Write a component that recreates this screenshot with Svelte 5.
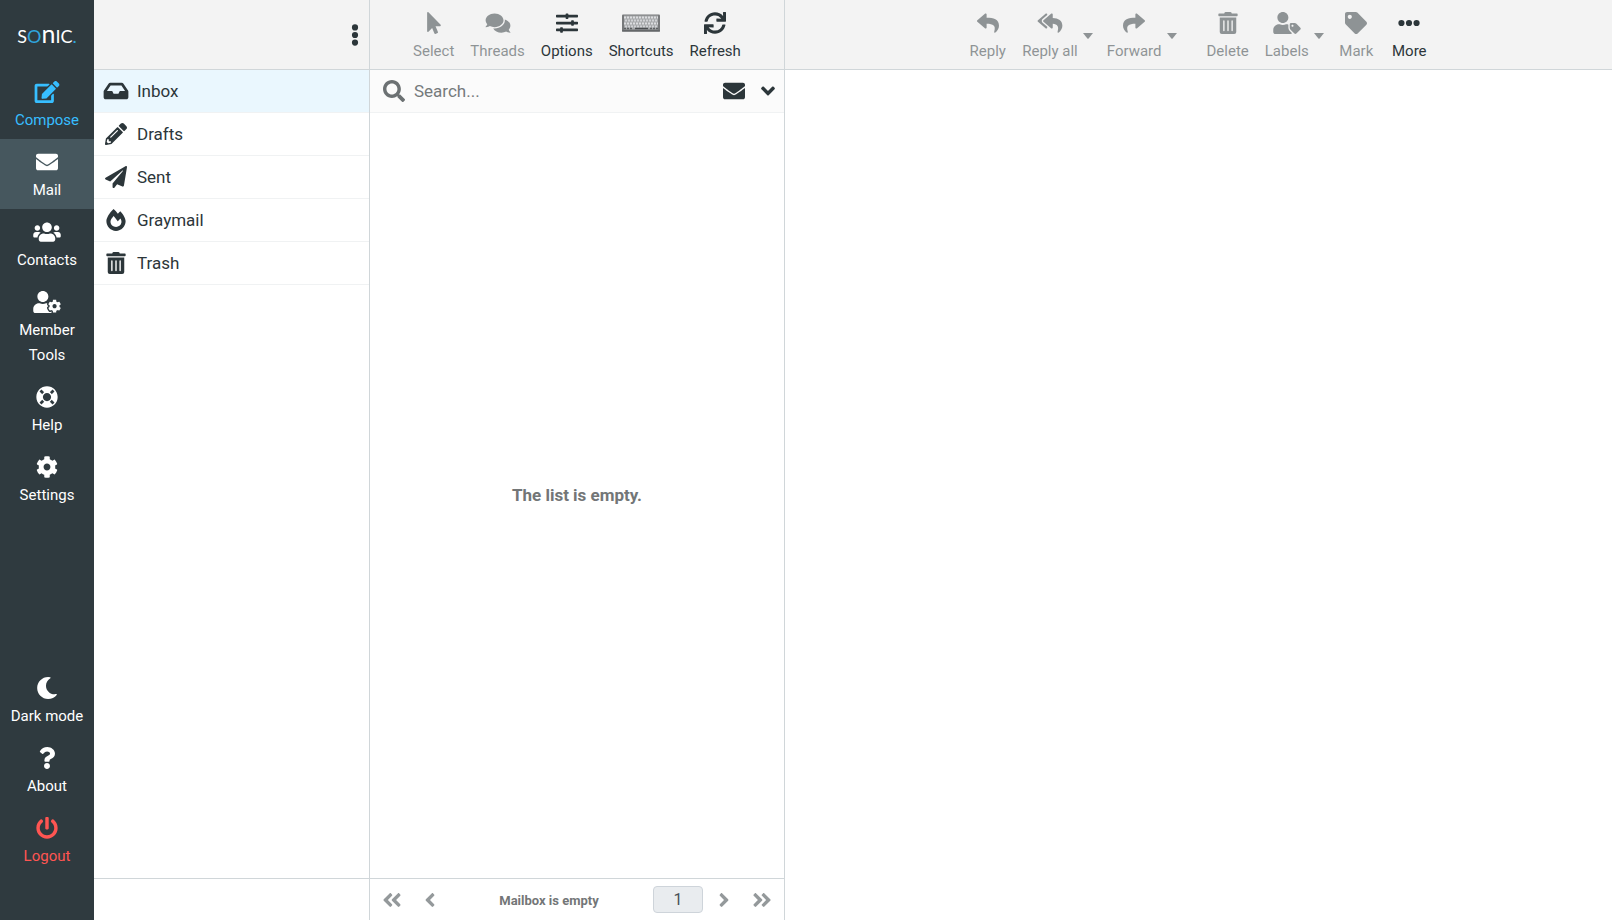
<script>
  const icons = {
    edit: [576, 'M402.6 83.2l90.2 90.2c3.8 3.8 3.8 10 0 13.8L274.4 405.6l-92.8 10.3c-12.4 1.4-22.9-9.1-21.5-21.5l10.3-92.8L388.8 83.2c3.8-3.8 10-3.8 13.8 0zm162-22.9l-48.8-48.8c-15.2-15.2-39.9-15.2-55.2 0l-35.4 35.4c-3.8 3.8-3.8 10 0 13.8l90.2 90.2c3.8 3.8 10 3.8 13.8 0l35.4-35.4c15.2-15.3 15.2-40 0-55.2zM384 346.2V448H64V128h229.8c3.2 0 6.2-1.3 8.5-3.5l40-40c7.6-7.6 2.2-20.5-8.5-20.5H48C21.5 64 0 85.5 0 112v352c0 26.5 21.5 48 48 48h352c26.5 0 48-21.5 48-48V306.2c0-10.7-12.9-16-20.5-8.5l-40 40c-2.2 2.3-3.5 5.3-3.5 8.5z'],
    envelope: [512, 'M502.3 190.8c3.9-3.1 9.7-.2 9.7 4.7V400c0 26.5-21.5 48-48 48H48c-26.5 0-48-21.5-48-48V195.6c0-5 5.7-7.8 9.7-4.7 22.4 17.4 52.1 39.5 154.1 113.6 21.1 15.4 56.7 47.8 92.2 47.6 35.7.3 72-32.8 92.3-47.6 102-74.1 131.6-96.3 154-113.7zM256 320c23.2.4 56.6-29.2 73.4-41.4 132.7-96.3 142.8-104.7 173.4-128.7 5.8-4.5 9.2-11.5 9.2-18.9v-19c0-26.5-21.5-48-48-48H48c-26.5 0-48 21.5-48 48v19c0 7.4 3.4 14.3 9.2 18.9 30.6 23.9 40.7 32.4 173.4 128.7 16.8 12.2 50.2 41.8 73.4 41.4z'],
    users: [640, 'M96 224c35.3 0 64-28.7 64-64s-28.7-64-64-64-64 28.7-64 64 28.7 64 64 64zm448 0c35.3 0 64-28.7 64-64s-28.7-64-64-64-64 28.7-64 64 28.7 64 64 64zm32 32h-64c-17.6 0-33.5 7.1-45.1 18.6 40.3 22.1 68.9 62 75.1 109.4h66c17.7 0 32-14.3 32-32v-32c0-35.3-28.7-64-64-64zm-256 0c61.9 0 112-50.1 112-112S381.9 32 320 32 208 82.1 208 144s50.1 112 112 112zm76.8 32h-8.3c-20.8 10-43.9 16-68.5 16s-47.6-6-68.5-16h-8.3C179.6 288 128 339.6 128 403.2V432c0 26.5 21.5 48 48 48h288c26.5 0 48-21.5 48-48v-28.8c0-63.6-51.6-115.2-115.2-115.2zm-223.7-13.4C161.5 263.1 145.6 256 128 256H64c-35.3 0-64 28.7-64 64v32c0 17.7 14.3 32 32 32h65.9c6.3-47.4 34.9-87.3 75.2-109.4z'],
    userCog: [640, 'M610.5 373.3c2.6-14.1 2.6-28.5 0-42.6l25.8-14.9c3-1.7 4.3-5.2 3.3-8.5-6.7-21.6-18.2-41.2-33.2-57.4-2.3-2.5-6-3.1-9-1.4l-25.8 14.9c-10.9-9.3-23.4-16.5-36.9-21.3v-29.8c0-3.4-2.4-6.4-5.7-7.1-22.3-5-45-4.8-66.2 0-3.3.7-5.7 3.7-5.7 7.1v29.8c-13.5 4.8-26 12-36.9 21.3l-25.8-14.9c-2.9-1.7-6.7-1.1-9 1.4-15 16.2-26.5 35.8-33.2 57.4-1 3.3.4 6.8 3.3 8.5l25.8 14.9c-2.6 14.1-2.6 28.5 0 42.6l-25.8 14.9c-3 1.7-4.3 5.2-3.3 8.5 6.7 21.6 18.2 41.1 33.2 57.4 2.3 2.5 6 3.1 9 1.4l25.8-14.9c10.9 9.3 23.4 16.5 36.9 21.3v29.8c0 3.4 2.4 6.4 5.7 7.1 22.3 5 45 4.8 66.2 0 3.3-.7 5.7-3.7 5.7-7.1v-29.8c13.5-4.8 26-12 36.9-21.3l25.8 14.9c2.9 1.7 6.7 1.1 9-1.4 15-16.2 26.5-35.8 33.2-57.4 1-3.3-.4-6.8-3.3-8.5l-25.8-14.9zM496 400.5c-26.8 0-48.5-21.8-48.5-48.5s21.8-48.5 48.5-48.5 48.5 21.8 48.5 48.5-21.7 48.5-48.5 48.5zM224 256c70.7 0 128-57.3 128-128S294.7 0 224 0 96 57.3 96 128s57.3 128 128 128zm201.2 226.5c-2.3-1.2-4.6-2.6-6.8-3.9l-7.9 4.6c-6 3.4-12.8 5.3-19.6 5.3-10.9 0-21.4-4.6-28.9-12.6-18.3-19.8-32.3-43.9-40.2-69.6-5.5-17.7 1.9-36.4 17.9-45.7l7.9-4.6c-.1-2.6-.1-5.2 0-7.8l-7.9-4.6c-16-9.2-23.4-28-17.9-45.7.9-2.9 2.2-5.8 3.2-8.7-3.8-.3-7.5-1.2-11.4-1.2h-16.7c-22.2 10.2-46.9 16-72.9 16s-50.6-5.8-72.9-16h-16.7C60.2 288 0 348.2 0 422.4V464c0 26.5 21.5 48 48 48h352c10.1 0 19.5-3.2 27.2-8.5-1.2-3.8-2-7.7-2-11.8v-9.2z'],
    lifeRing: [512, 'M256 8C119.033 8 8 119.033 8 256s111.033 248 248 248 248-111.033 248-248S392.967 8 256 8zm173.696 119.559l-63.399 63.399c-10.987-18.559-26.67-34.252-45.255-45.255l63.399-63.399a218.396 218.396 0 0 1 45.255 45.255zM256 352c-53.019 0-96-42.981-96-96s42.981-96 96-96 96 42.981 96 96-42.981 96-96 96zM127.559 82.304l63.399 63.399c-18.559 10.987-34.252 26.67-45.255 45.255l-63.399-63.399a218.372 218.372 0 0 1 45.255-45.255zM82.304 384.441l63.399-63.399c10.987 18.559 26.67 34.252 45.255 45.255l-63.399 63.399a218.396 218.396 0 0 1-45.255-45.255zm302.137 45.255l-63.399-63.399c18.559-10.987 34.252-26.67 45.255-45.255l63.399 63.399a218.403 218.403 0 0 1-45.255 45.255z'],
    cog: [512, 'M487.4 315.7l-42.6-24.6c4.3-23.2 4.3-47 0-70.2l42.6-24.6c4.9-2.8 7.1-8.6 5.5-14-11.1-35.6-30-67.8-54.7-94.6-3.8-4.1-10-5.1-14.8-2.3L380.8 110c-17.9-15.4-38.5-27.3-60.8-35.1V25.8c0-5.6-3.9-10.5-9.4-11.7-36.7-8.2-74.3-7.8-109.2 0-5.5 1.2-9.4 6.1-9.4 11.7V75c-22.2 7.9-42.8 19.8-60.8 35.1L88.7 85.5c-4.9-2.8-11-1.9-14.8 2.3-24.7 26.7-43.6 58.9-54.7 94.6-1.7 5.4.6 11.2 5.5 14L67.3 221c-4.3 23.2-4.3 47 0 70.2l-42.6 24.6c-4.9 2.8-7.1 8.6-5.5 14 11.1 35.6 30 67.8 54.7 94.6 3.8 4.1 10 5.1 14.8 2.3l42.6-24.6c17.9 15.4 38.5 27.3 60.8 35.1v49.2c0 5.6 3.9 10.5 9.4 11.7 36.7 8.2 74.3 7.8 109.2 0 5.5-1.2 9.4-6.1 9.4-11.7v-49.2c22.2-7.9 42.8-19.8 60.8-35.1l42.6 24.6c4.9 2.8 11 1.9 14.8-2.3 24.7-26.7 43.6-58.9 54.7-94.6 1.5-5.5-.7-11.3-5.6-14.1zM256 336c-44.1 0-80-35.9-80-80s35.9-80 80-80 80 35.9 80 80-35.9 80-80 80z'],
    moon: [512, 'M283.211 512c78.962 0 151.079-35.925 198.857-94.792 7.068-8.708-.639-21.43-11.562-19.35-124.203 23.654-238.262-71.576-238.262-196.954 0-72.222 38.662-138.635 101.498-174.394 9.686-5.512 7.25-20.197-3.756-22.23A258.156 258.156 0 0 0 283.211 0c-141.309 0-256 114.511-256 256 0 141.309 114.511 256 256 256z'],
    question: [384, 'M202.021 0C122.202 0 70.503 32.703 29.914 91.026c-7.363 10.58-5.093 25.086 5.178 32.874l43.138 32.709c10.373 7.865 25.132 6.026 33.253-4.148 25.049-31.381 43.63-49.449 82.757-49.449 30.764 0 68.816 19.799 68.816 49.631 0 22.552-18.617 34.134-48.993 51.164-35.423 19.86-82.299 44.576-82.299 106.405V320c0 13.255 10.745 24 24 24h72.471c13.255 0 24-10.745 24-24v-5.773c0-42.86 125.268-44.645 125.268-160.627C377.504 66.256 286.902 0 202.021 0zM192 373.459c-38.196 0-69.271 31.075-69.271 69.271 0 38.195 31.075 69.27 69.271 69.27s69.271-31.075 69.271-69.271-31.075-69.27-69.271-69.27z'],
    power: [512, 'M400 54.1c63 45 104 118.6 104 201.9 0 136.8-110.8 247.7-247.5 248C120 504.3 8.2 393 8 256.4 7.9 173.1 48.9 99.3 111.8 54.2c11.7-8.3 28-4.8 35 7.7L162.6 90c5.9 10.5 3.1 23.8-6.6 31-41.5 30.8-68 79.6-68 134.9-.1 92.3 74.5 168.1 168 168.1 91.6 0 168.6-74.2 168-169.1-.3-51.8-24.7-101.8-68.1-134-9.7-7.2-12.4-20.5-6.5-30.9l15.8-28.1c7-12.4 23.2-16.1 34.8-7.8zM296 264V24c0-13.3-10.7-24-24-24h-32c-13.3 0-24 10.7-24 24v240c0 13.3 10.7 24 24 24h32c13.3 0 24-10.7 24-24z'],
    inbox: [576, 'M567.938 243.908L462.25 85.374A48.003 48.003 0 0 0 422.311 64H153.689a48 48 0 0 0-39.938 21.374L8.062 243.908A47.994 47.994 0 0 0 0 270.533V400c0 26.51 21.49 48 48 48h480c26.51 0 48-21.49 48-48V270.533a47.994 47.994 0 0 0-8.062-26.625zM162.252 128h251.497l85.333 128H376l-32 64H232l-32-64H76.918l85.334-128z'],
    pencil: [512, 'M497.9 142.1l-46.1 46.1c-4.7 4.7-12.3 4.7-17 0l-111-111c-4.7-4.7-4.7-12.3 0-17l46.1-46.1c18.7-18.7 49.1-18.7 67.9 0l60.1 60.1c18.8 18.7 18.8 49.1 0 67.9zM284.2 99.8L21.6 362.4.4 483.9c-2.9 16.4 11.4 30.6 27.8 27.8l121.5-21.3 262.6-262.6c4.7-4.7 4.7-12.3 0-17l-111-111c-4.8-4.7-12.4-4.7-17.1 0zM124.1 339.9c-5.5-5.5-5.5-14.3 0-19.8l154-154c5.5-5.5 14.3-5.5 19.8 0s5.5 14.3 0 19.8l-154 154c-5.5 5.5-14.3 5.5-19.8 0zM88 424h48v36.3l-64.5 11.3-31.1-31.1L51.7 376H88v48z'],
    plane: [512, 'M476 3.2L12.5 270.6c-18.1 10.4-15.8 35.6 2.2 43.2L121 358.4l287.3-253.2c5.5-4.9 13.3 2.6 8.6 8.3L176 407v80.5c0 23.6 28.5 32.9 42.5 15.8L282 426l124.6 52.2c14.2 6 30.4-2.9 33-18.2l72-432C515 7.8 493.3-6.8 476 3.2z'],
    fire: [448, 'M323.56 51.2c-20.8 19.3-39.58 39.59-56.22 59.97C240.08 73.62 206.28 35.53 168 0 69.74 91.17 0 209.96 0 281.6 0 408.85 100.29 512 224 512s224-103.15 224-230.4c0-53.27-51.98-163.14-124.44-230.4zm-19.47 340.65C282.43 407.01 255.72 416 226.86 416 154.71 416 96 368.26 96 290.75c0-38.61 24.31-72.63 72.79-130.75 6.93 7.98 98.83 125.34 98.83 125.34l58.63-66.88c4.14 6.85 7.91 13.55 11.27 19.97 27.35 52.19 15.81 118.97-33.43 153.42z'],
    trash: [448, 'M32 464a48 48 0 0 0 48 48h288a48 48 0 0 0 48-48V128H32zm272-256a16 16 0 0 1 32 0v224a16 16 0 0 1-32 0zm-96 0a16 16 0 0 1 32 0v224a16 16 0 0 1-32 0zm-96 0a16 16 0 0 1 32 0v224a16 16 0 0 1-32 0zM432 32H312l-9.4-18.7A24 24 0 0 0 281.1 0H166.8a23.72 23.72 0 0 0-21.4 13.3L136 32H16A16 16 0 0 0 0 48v32a16 16 0 0 0 16 16h416a16 16 0 0 0 16-16V48a16 16 0 0 0-16-16z'],
    pointer: [320, 'M302.189 329.126H196.105l55.831 135.993c3.889 9.428-.555 19.999-9.444 23.999l-49.165 21.427c-9.165 4-19.443-.571-23.332-9.714l-53.053-129.136-86.664 89.138C18.729 472.71 0 463.554 0 447.977V18.299C0 1.899 19.921-6.096 30.277 5.443l284.412 292.542c11.472 11.179 3.007 31.141-12.5 31.141z'],
    comments: [576, 'M416 192c0-88.4-93.1-160-208-160S0 103.6 0 192c0 34.3 14.1 65.9 38 92-13.4 30.2-35.5 54.2-35.8 54.5-2.2 2.3-2.8 5.7-1.5 8.7S4.8 352 8 352c36.6 0 66.9-12.3 88.7-25 32.2 15.7 70.3 25 111.3 25 114.9 0 208-71.6 208-160zm122 220c23.9-26 38-57.7 38-92 0-66.9-53.5-124.2-129.3-148.1.9 6.6 1.3 13.3 1.3 20.1 0 105.9-107.7 192-240 192-10.8 0-21.3-.8-31.7-1.9C207.8 439.6 281.8 480 368 480c41 0 79.1-9.2 111.3-25 21.8 12.7 52.1 25 88.7 25 3.2 0 6.1-1.9 7.3-4.8 1.3-2.9.7-6.3-1.5-8.7-.3-.3-22.4-24.2-35.8-54.5z'],
    sliders: [512, 'M496 384H160v-16c0-8.8-7.2-16-16-16h-32c-8.8 0-16 7.2-16 16v16H16c-8.8 0-16 7.2-16 16v32c0 8.8 7.2 16 16 16h80v16c0 8.8 7.2 16 16 16h32c8.8 0 16-7.2 16-16v-16h336c8.8 0 16-7.2 16-16v-32c0-8.8-7.2-16-16-16zm0-160h-80v-16c0-8.8-7.2-16-16-16h-32c-8.8 0-16 7.2-16 16v16H16c-8.8 0-16 7.2-16 16v32c0 8.8 7.2 16 16 16h336v16c0 8.8 7.2 16 16 16h32c8.8 0 16-7.2 16-16v-16h80c8.8 0 16-7.2 16-16v-32c0-8.8-7.2-16-16-16zm0-160H288V48c0-8.8-7.2-16-16-16h-32c-8.8 0-16 7.2-16 16v16H16C7.2 64 0 71.2 0 80v32c0 8.8 7.2 16 16 16h208v16c0 8.8 7.2 16 16 16h32c8.8 0 16-7.2 16-16v-16h208c8.8 0 16-7.2 16-16V80c0-8.8-7.2-16-16-16z'],
    sync: [512, 'M440.65 12.57l4 82.77A247.16 247.16 0 0 0 255.83 8C134.73 8 33.91 94.92 12.29 209.82A12 12 0 0 0 24.09 224h49.05a12 12 0 0 0 11.67-9.26 175.91 175.91 0 0 1 317-56.94l-101.46-4.86a12 12 0 0 0-12.57 12v47.41a12 12 0 0 0 12 12H500a12 12 0 0 0 12-12V12a12 12 0 0 0-12-12h-47.37a12 12 0 0 0-11.98 12.57zM255.83 432a175.61 175.61 0 0 1-146-77.8l101.8 4.87a12 12 0 0 0 12.57-12v-47.4a12 12 0 0 0-12-12H12a12 12 0 0 0-12 12V500a12 12 0 0 0 12 12h47.35a12 12 0 0 0 12-12.6l-4.15-82.57A247.17 247.17 0 0 0 255.83 504c121.11 0 221.93-86.92 243.55-201.82a12 12 0 0 0-11.8-14.18h-49.05a12 12 0 0 0-11.67 9.26A175.86 175.86 0 0 1 255.83 432z'],
    search: [512, 'M505 442.7L405.3 343c-4.5-4.5-10.6-7-17-7H372c27.6-35.3 44-79.7 44-128C416 93.1 322.9 0 208 0S0 93.1 0 208s93.1 208 208 208c48.3 0 92.7-16.4 128-44v16.3c0 6.4 2.5 12.5 7 17l99.7 99.7c9.4 9.4 24.6 9.4 33.9 0l28.3-28.3c9.4-9.4 9.4-24.6.1-34zM208 336c-70.7 0-128-57.2-128-128 0-70.7 57.2-128 128-128 70.7 0 128 57.2 128 128 0 70.7-57.2 128-128 128z'],
    angleDown: [320, 'M143 352.3L7 216.3c-9.4-9.4-9.4-24.6 0-33.9l22.6-22.6c9.4-9.4 24.6-9.4 33.9 0l96.4 96.4 96.4-96.4c9.4-9.4 24.6-9.4 33.9 0l22.6 22.6c9.4 9.4 9.4 24.6 0 33.9l-136 136c-9.2 9.4-24.4 9.4-33.8 0z'],
    angle: [256, 'M31.7 239l136-136c9.4-9.4 24.6-9.4 33.9 0l22.6 22.6c9.4 9.4 9.4 24.6 0 33.9L127.9 256l96.4 96.4c9.4 9.4 9.4 24.6 0 33.9L201.7 409c-9.4 9.4-24.6 9.4-33.9 0l-136-136c-9.5-9.4-9.5-24.6-.1-34z'],
    angles: [448, 'M31.7 239l136-136c9.4-9.4 24.6-9.4 33.9 0l22.6 22.6c9.4 9.4 9.4 24.6 0 33.9L127.9 256l96.4 96.4c9.4 9.4 9.4 24.6 0 33.9L201.7 409c-9.4 9.4-24.6 9.4-33.9 0l-136-136c-9.5-9.4-9.5-24.6-.1-34zM223.7 239l136-136c9.4-9.4 24.6-9.4 33.9 0l22.6 22.6c9.4 9.4 9.4 24.6 0 33.9L319.9 256l96.4 96.4c9.4 9.4 9.4 24.6 0 33.9L393.7 409c-9.4 9.4-24.6 9.4-33.9 0l-136-136c-9.5-9.4-9.5-24.6-.1-34z'],
    reply: [512, 'M8.309 189.836L184.313 37.851C199.719 24.546 224 35.347 224 56.015v80.053c160.629 1.839 288 34.032 288 186.258 0 61.441-39.581 122.309-83.333 154.132-13.653 9.931-33.111-2.533-28.077-18.631 45.344-145.012-21.507-183.51-176.59-185.742V360c0 20.7-24.3 31.453-39.687 18.164l-176.004-152c-11.071-9.562-11.086-26.753 0-36.328z'],
    replyAll: [576, 'M136.309 189.836L312.313 37.851C327.72 24.546 352 35.348 352 56.015v82.763c129.182 10.231 224 52.212 224 183.548 0 61.441-39.582 122.309-83.333 154.132-13.653 9.931-33.111-2.533-28.077-18.631 38.512-123.162-3.922-169.482-112.59-182.015v84.175c0 20.701-24.3 31.453-39.687 18.164L136.309 226.164c-11.071-9.561-11.086-26.753 0-36.328zm-128 36.328L184.313 378.15C199.7 391.439 224 380.687 224 359.986v-15.818l-108.606-93.785A55.96 55.96 0 0 1 96 207.998a55.953 55.953 0 0 1 19.393-42.38L224 71.832V56.015c0-20.667-24.28-31.469-39.687-18.164L8.309 189.836c-11.086 9.575-11.071 26.767 0 36.328z'],
    tag: [512, 'M0 252.118V48C0 21.49 21.49 0 48 0h204.118a48 48 0 0 1 33.941 14.059l211.882 211.882c18.745 18.745 18.745 49.137 0 67.882L293.823 497.941c-18.745 18.745-49.137 18.745-67.882 0L14.059 286.059A48 48 0 0 1 0 252.118zM112 64c-26.51 0-48 21.49-48 48s21.49 48 48 48 48-21.49 48-48-21.49-48-48-48z'],
    userTag: [640, 'M630.6 364.9l-90.3-90.2c-12-12-28.3-18.7-45.3-18.7h-79.3c-17.7 0-32 14.3-32 32v79.2c0 17 6.7 33.2 18.7 45.2l90.3 90.2c12.5 12.5 32.8 12.5 45.3 0l92.5-92.5c12.6-12.5 12.6-32.7.1-45.2zm-182.8-21c-13.3 0-24-10.7-24-24s10.7-24 24-24 24 10.7 24 24c0 13.2-10.7 24-24 24zm-223.8-88c70.7 0 128-57.3 128-128C352 57.3 294.7 0 224 0S96 57.3 96 128c0 70.6 57.3 127.9 128 127.9zm127.8 111.2V294c-12.2-3.6-24.9-6.2-38.2-6.2h-16.7c-22.2 10.2-46.9 16-72.9 16s-50.6-5.8-72.9-16h-16.7C60.2 287.9 0 348.1 0 422.3v41.6c0 26.5 21.5 48 48 48h352c15.5 0 29.1-7.5 37.9-18.9l-58-58c-18.1-18.1-28.1-42.2-28.1-67.9z'],
    dots: [512, 'M8 256a72 72 0 1 0 144 0a72 72 0 1 0-144 0zM184 256a72 72 0 1 0 144 0a72 72 0 1 0-144 0zM360 256a72 72 0 1 0 144 0a72 72 0 1 0-144 0z'],
    dotsV: [192, 'M24 80a72 72 0 1 0 144 0a72 72 0 1 0-144 0zM24 256a72 72 0 1 0 144 0a72 72 0 1 0-144 0zM24 432a72 72 0 1 0 144 0a72 72 0 1 0-144 0z']
  };

  const mainTasks = [
    { icon: 'edit', label: 'Compose', kind: 'compose' },
    { icon: 'envelope', label: 'Mail', kind: 'selected' },
    { icon: 'users', label: 'Contacts' },
    { icon: 'userCog', label: 'Member Tools' },
    { icon: 'lifeRing', label: 'Help' },
    { icon: 'cog', label: 'Settings' }
  ];
  const metaTasks = [
    { icon: 'moon', label: 'Dark mode' },
    { icon: 'question', label: 'About' },
    { icon: 'power', label: 'Logout', kind: 'logout' }
  ];
  const folders = [
    { icon: 'inbox', label: 'Inbox' },
    { icon: 'pencil', label: 'Drafts' },
    { icon: 'plane', label: 'Sent' },
    { icon: 'fire', label: 'Graymail' },
    { icon: 'trash', label: 'Trash' }
  ];
  const listTools = [
    { icon: 'pointer', label: 'Select', disabled: true },
    { icon: 'comments', label: 'Threads', disabled: true },
    { icon: 'sliders', label: 'Options' },
    { icon: 'keyboard', label: 'Shortcuts' },
    { icon: 'sync', label: 'Refresh' }
  ];
  const messageTools = [
    { icon: 'reply', label: 'Reply', disabled: true },
    { icon: 'replyAll', label: 'Reply all', disabled: true, menu: true },
    { icon: 'reply', flip: true, label: 'Forward', disabled: true, menu: true, last: true },
    { icon: 'trash', label: 'Delete', disabled: true },
    { icon: 'userTag', label: 'Labels', disabled: true, menu: true },
    { icon: 'tag', label: 'Mark', disabled: true },
    { icon: 'dots', label: 'More' }
  ];

  let current = $state('Inbox');
</script>

{#snippet icon(name, flip = false)}
  <svg class="icon" class:flip viewBox="0 0 {icons[name][0]} 512" aria-hidden="true"><path d={icons[name][1]} /></svg>
{/snippet}

{#snippet keyboard()}
  <svg class="keyboard" viewBox="0 0 38 17" aria-hidden="true">
    <rect width="38" height="17" rx="1" fill="#77797b" />
    <rect x="2" y="1" width="34" height="14" fill="#a6a8aa" />
    <path d="M2 3h34M2 9h34" stroke="#dcdde0" stroke-width="2" stroke-dasharray="2 1" />
    <path d="M3 6h32M3 12h32" stroke="#d0d2d5" stroke-width="2" stroke-dasharray="2 1" />
    <path d="M13 14h13" stroke="#4b4e50" stroke-width="1.5" />
    <path d="M2 14h9M28 14h8" stroke="#5e6163" stroke-width="1.5" stroke-dasharray="2 1" />
    <path d="M0 16.5h38" stroke="#55585a" />
  </svg>
{/snippet}

{#snippet task(item)}
  <a class="task {item.kind ?? ''}" href="#{item.icon}">
    {@render icon(item.icon)}
    <span>{item.label}</span>
  </a>
{/snippet}

{#snippet tool(item)}
  <div class="tool-group" class:menu={item.menu} class:last={item.last}>
    <button class="tool" type="button" disabled={item.disabled}>
      {#if item.icon === 'keyboard'}{@render keyboard()}{:else}{@render icon(item.icon, item.flip)}{/if}
      <span>{item.label}</span>
    </button>
    {#if item.menu}
      <button class="caret" type="button" disabled aria-label="{item.label} options">
        <svg viewBox="0 0 10 6" aria-hidden="true"><path d="M0 0h10L5.6 5.4a.8.8 0 0 1-1.2 0z" /></svg>
      </button>
    {/if}
  </div>
{/snippet}

<div class="layout">
  <nav class="taskmenu" aria-label="Tasks">
    <div class="logo"><span>S</span><span class="blue">O</span><span class="tall">n</span><span>I</span><span>C</span><span class="blue">.</span></div>
    {#each mainTasks as item}{@render task(item)}{/each}
    <div class="spacer"></div>
    {#each metaTasks as item}{@render task(item)}{/each}
  </nav>

  <section class="column folders">
    <header class="bar folder-head">
      <button class="plain more" type="button" aria-label="Folder actions">{@render icon('dotsV')}</button>
    </header>
    <ul>
      {#each folders as f}
        <li class:selected={current === f.label}>
          <a href="#{f.label}" onclick={() => (current = f.label)}>{@render icon(f.icon)}<span>{f.label}</span></a>
        </li>
      {/each}
    </ul>
    <footer></footer>
  </section>

  <section class="column messages">
    <header class="bar">{#each listTools as item}{@render tool(item)}{/each}</header>
    <form class="search">
      <label for="q">{@render icon('search')}</label>
      <input id="q" type="text" placeholder="Search..." aria-label="Search" />
      <button class="plain" type="button" aria-label="Unread only">{@render icon('envelope')}</button>
      <button class="plain toggle" type="button" aria-label="Search options">{@render icon('angleDown')}</button>
    </form>
    <div class="empty">The list is empty.</div>
    <footer>
      <button class="plain" type="button" disabled aria-label="First page">{@render icon('angles')}</button>
      <button class="plain" type="button" disabled aria-label="Previous page">{@render icon('angle')}</button>
      <span class="count">Mailbox is empty</span>
      <input class="page" type="text" value="1" disabled aria-label="Page" />
      <button class="plain" type="button" disabled aria-label="Next page">{@render icon('angle', true)}</button>
      <button class="plain" type="button" disabled aria-label="Last page">{@render icon('angles', true)}</button>
    </footer>
  </section>

  <main class="column">
    <header class="bar">{#each messageTools as item}{@render tool(item)}{/each}</header>
  </main>
</div>

<style>
  :global(body) {
    margin: 0;
    background: #fff;
  }
  .layout {
    display: grid;
    grid-template-columns: 94px 276px 415px minmax(0, 1fr);
    min-height: 100vh;
    color: #2c363a;
    font: 17px/25px Roboto, sans-serif;
  }
  .layout * {
    box-sizing: border-box;
  }
  button,
  input {
    font: inherit;
    color: inherit;
  }
  button {
    border: 0;
    background: none;
    padding: 0;
    cursor: pointer;
  }
  button:disabled {
    cursor: default;
  }
  a {
    color: inherit;
    text-decoration: none;
  }
  .icon {
    display: block;
    flex: none;
    width: 28px;
    height: 22px;
    fill: currentColor;
  }
  .flip {
    transform: scaleX(-1);
  }

  .taskmenu {
    display: flex;
    flex-direction: column;
    padding-bottom: 45px;
    background: #2f3a3f;
    color: #fff;
  }
  .logo {
    display: flex;
    justify-content: center;
    align-items: baseline;
    height: 69px;
    padding-top: 17px;
    font: 18px/32px Lato, sans-serif;
  }
  .logo .tall {
    font-size: 25px;
  }
  .logo .blue {
    color: #2fa5dd;
  }
  .task {
    display: flex;
    flex-direction: column;
    align-items: center;
    gap: 5px;
    padding: 12px 8px 6px;
    font-size: 15px;
    text-align: center;
  }
  .compose {
    color: #37beff;
  }
  .selected.task {
    background: #46575e;
  }
  .logout {
    color: #ff5552;
  }
  .spacer {
    flex: 1;
  }

  .column {
    display: flex;
    flex-direction: column;
    border-right: 1px solid #d0d6d9;
  }
  main.column {
    border-right: 0;
  }
  .bar {
    display: flex;
    justify-content: center;
    height: 70px;
    background: #f3f3f3;
    border-bottom: 1px solid #d0d6d9;
  }
  .folder-head {
    justify-content: flex-end;
    align-items: center;
  }
  ul {
    flex: 1;
    margin: 0;
    padding: 0;
    list-style: none;
  }
  li {
    border-bottom: 1px solid #f0f2f3;
  }
  li.selected {
    background: #eaf7fe;
  }
  li a {
    display: flex;
    align-items: center;
    gap: 7px;
    height: 42px;
    padding: 0 8px;
  }

  .tool-group {
    display: flex;
  }
  .last {
    margin-right: 16px;
  }
  .tool {
    display: flex;
    flex-direction: column;
    align-items: center;
    gap: 5px;
    min-width: 53px;
    padding: 12px 8px 5px;
    font-size: 15px;
    line-height: 25px;
  }
  .menu .tool {
    padding-right: 4px;
  }
  .tool:disabled,
  .caret,
  footer button {
    opacity: 0.5;
  }
  .keyboard {
    display: block;
    width: 38px;
    height: 22px;
  }
  .caret {
    display: flex;
    justify-content: center;
    width: 13px;
    margin-right: 4px;
    padding-top: 33px;
  }
  .caret svg {
    width: 10px;
    height: 6px;
    fill: currentColor;
  }

  .search {
    display: flex;
    align-items: center;
    height: 43px;
    padding: 0 2px 0 10px;
    background: #fbfbfb;
    border-bottom: 1px solid #f0f2f3;
  }
  .search label {
    color: #6c7173;
  }
  .search input {
    flex: 1;
    min-width: 0;
    height: 42px;
    padding: 0 6px;
    border: 0;
    outline: 0;
    background: none;
  }
  .search input::placeholder {
    color: #757a7c;
    opacity: 1;
  }
  .plain {
    display: flex;
    justify-content: center;
    align-items: center;
    width: 38px;
    height: 40px;
  }
  .more,
  .toggle {
    width: 29px;
  }
  .empty {
    flex: 1;
    display: flex;
    align-items: center;
    justify-content: center;
    color: #737677;
    font-weight: 700;
  }
  footer {
    display: flex;
    align-items: center;
    height: 42px;
    padding: 0 3px;
    border-top: 1px solid #d0d6d9;
  }
  .count {
    flex: 1;
    padding: 2px 4px 0 0;
    text-align: center;
    color: #737677;
    font-size: 13px;
    font-weight: 700;
  }
  .page {
    width: 50px;
    height: 27px;
    margin-right: 2px;
    padding: 0;
    border: 1px solid #ced4da;
    border-radius: 4px;
    background: #e9ecef;
    color: #495057;
    font-size: 16px;
    text-align: center;
  }
</style>
